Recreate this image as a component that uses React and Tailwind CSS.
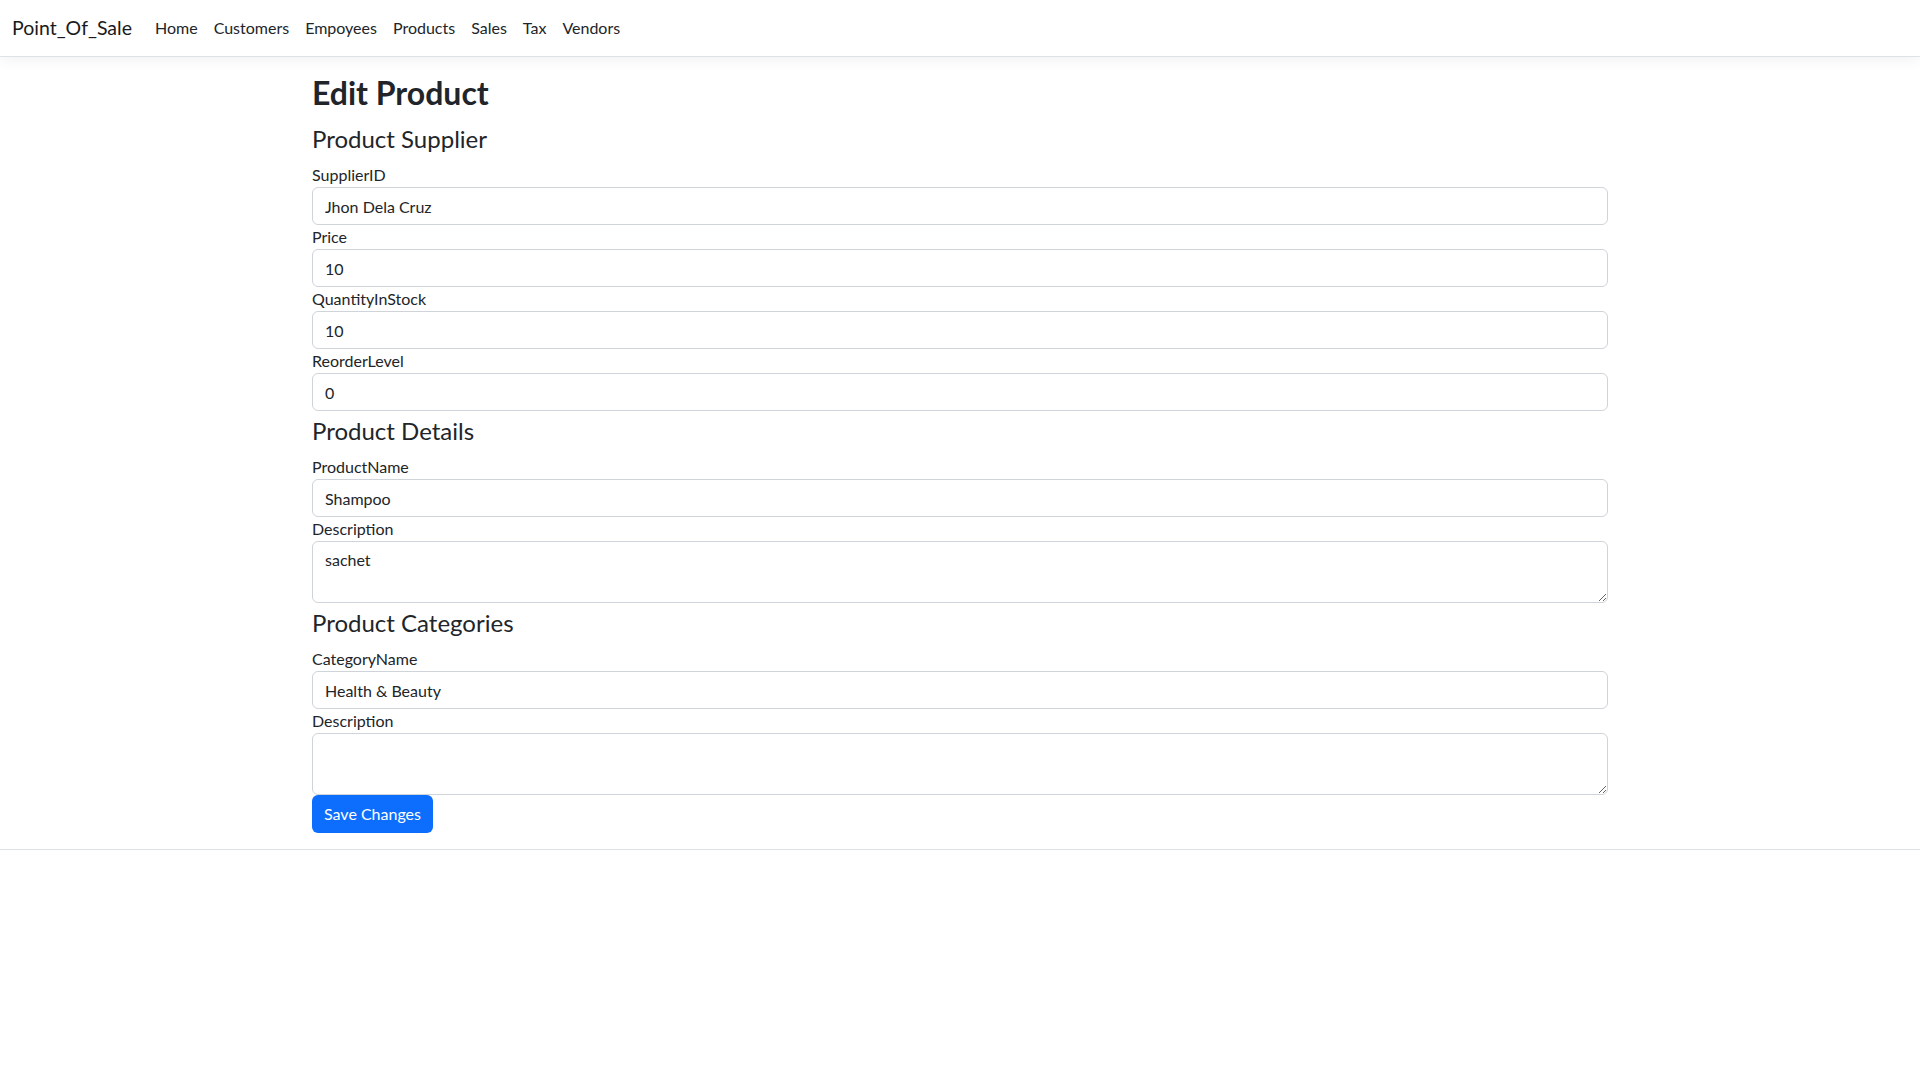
import React from 'react';

const FONT = "font-['Lato','Liberation_Sans',sans-serif]";

const navLinks = ['Home', 'Customers', 'Empoyees', 'Products', 'Sales', 'Tax', 'Vendors'];

const Label = ({ children }) => (
  <label className="block text-[16px] leading-[24px] text-[#212529]">{children}</label>
);

const Field = ({ label, value }) => (
  <div>
    <Label>{label}</Label>
    <input
      type="text"
      defaultValue={value}
      className="block w-full h-[38px] px-3 py-[6px] text-[16px] leading-[24px] text-[#212529] bg-white border border-[#ced4da] rounded-[6px] outline-none"
    />
  </div>
);

const Area = ({ label, value }) => (
  <div>
    <Label>{label}</Label>
    <textarea
      rows={2}
      defaultValue={value}
      className="block w-full h-[62px] px-3 py-[6px] text-[16px] leading-[24px] text-[#212529] bg-white border border-[#ced4da] rounded-[6px] outline-none"
    />
  </div>
);

const Section = ({ children }) => (
  <h4 className="mt-[5px] mb-[10px] text-[24px] leading-[29px] font-normal text-[#212529]">{children}</h4>
);

const App = () => {
  return (
    <div className={`min-h-screen bg-white text-[#212529] ${FONT}`}>
      <nav className="h-[57px] flex items-center px-3 bg-white border-b border-[#dee2e6] shadow-[0_4px_12px_rgba(0,0,0,0.05)] mb-4">
        <a className="text-[19.5px] leading-[30px] py-[5px] mr-[15px] text-[#1a1a1a]">Point_Of_Sale</a>
        <ul className="flex">
          {navLinks.map(l => (
            <li key={l}><a className="block px-2 py-2 text-[16px] leading-[24px] text-[#212529]">{l}</a></li>
          ))}
        </ul>
      </nav>

      <main className="w-[1320px] mx-auto px-3 pb-4 pt-px">
        <h2 className="h-[38px] mb-[12px] text-[32px] leading-[38px] font-bold text-[#212529]">Edit Product</h2>

        <Section>Product Supplier</Section>
        <Field label="SupplierID" value="Jhon Dela Cruz" />
        <Field label="Price" value="10" />
        <Field label="QuantityInStock" value="10" />
        <Field label="ReorderLevel" value="0" />

        <Section>Product Details</Section>
        <Field label="ProductName" value="Shampoo" />
        <Area label="Description" value="sachet" />

        <Section>Product Categories</Section>
        <Field label="CategoryName" value="Health & Beauty" />
        <Area label="Description" value="" />

        <button className="h-[38px] px-3 py-[6px] text-[16px] leading-[24px] text-white bg-[#0d6efd] rounded-[6px]">
          Save Changes
        </button>
      </main>

      <footer className="border-t border-[#dee2e6]"></footer>
    </div>
  );
};

export default App;
